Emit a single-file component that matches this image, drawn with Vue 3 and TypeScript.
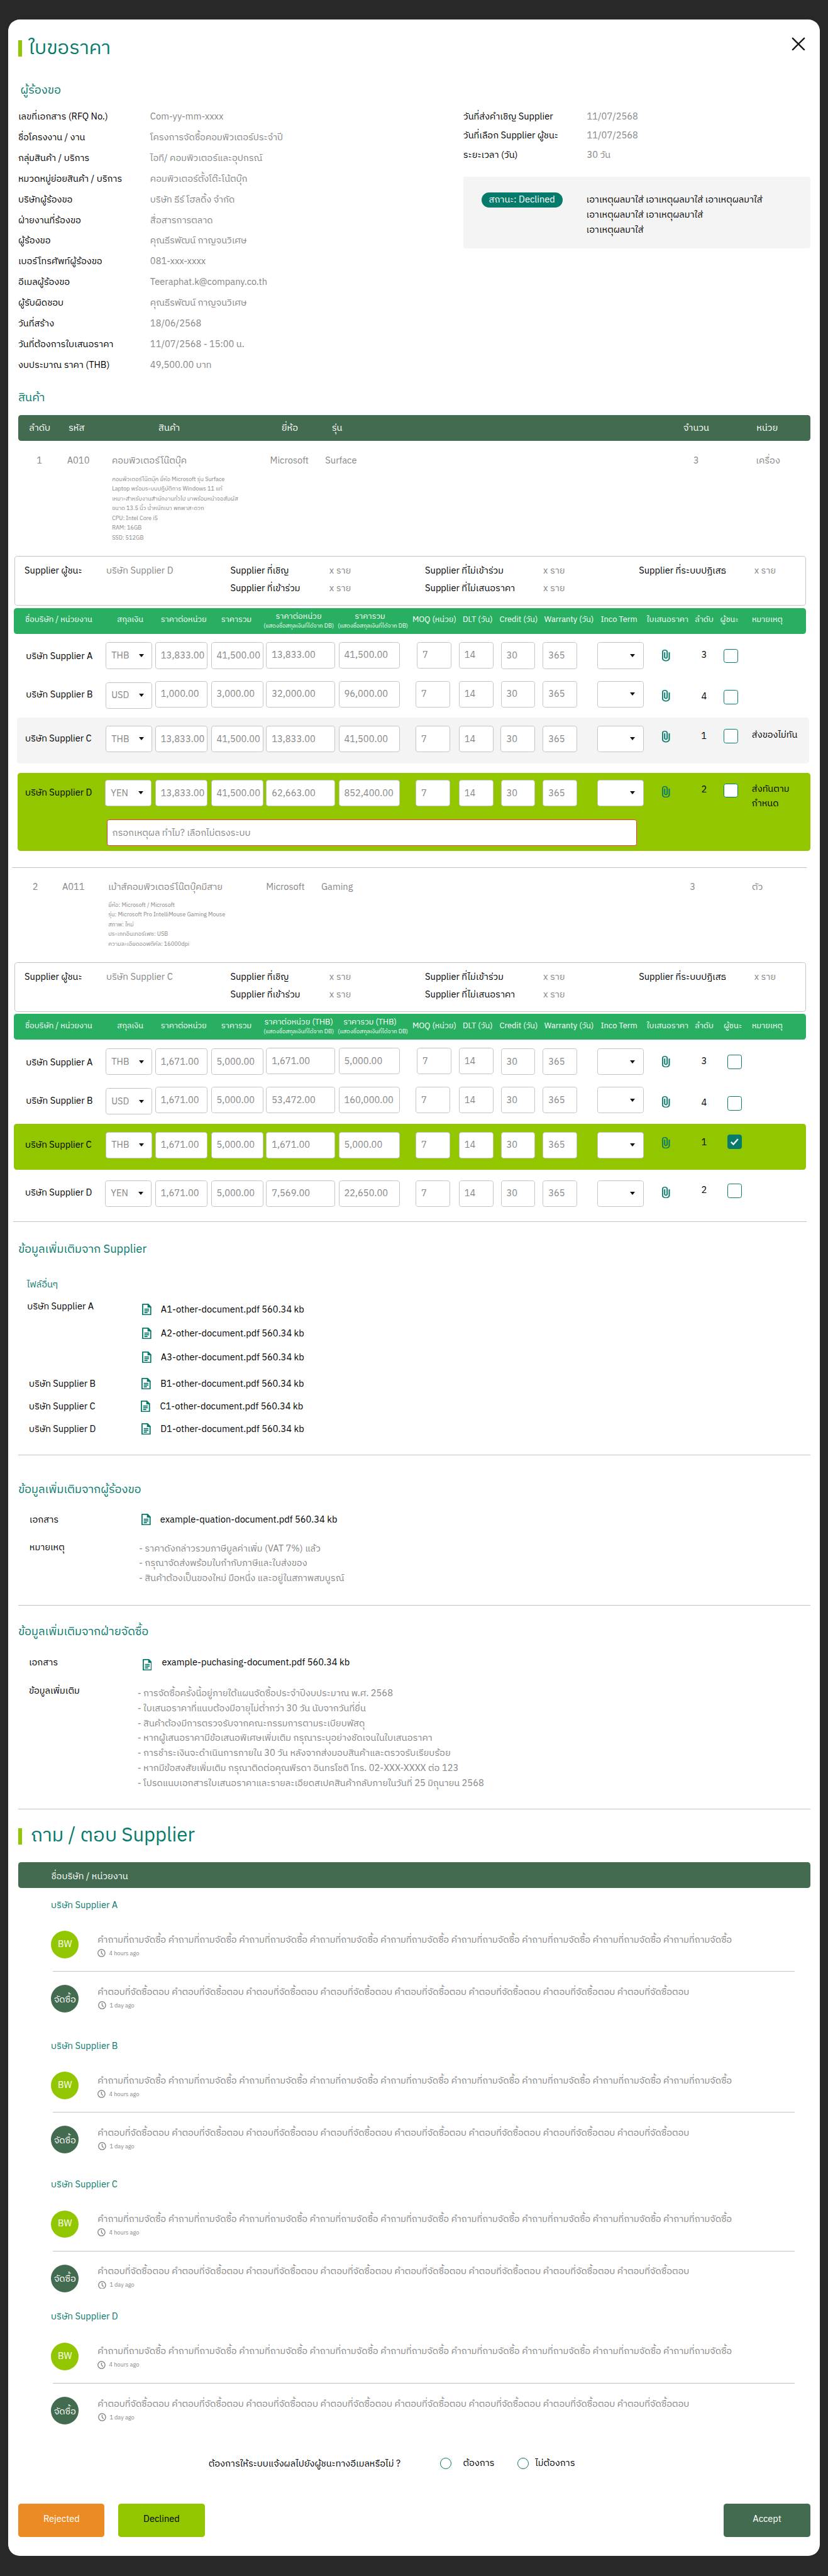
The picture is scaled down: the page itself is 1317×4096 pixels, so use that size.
<script setup lang="ts">
const details: [label: string, value: string][] = [
  ['เลขที่เอกสาร (RFQ No.)', 'Com-yy-mm-xxxx'],
  ['ชื่อโครงงาน / งาน', 'โครงการจัดซื้อคอมพิวเตอร์ประจำปี'],
  ['กลุ่มสินค้า / บริการ', 'ไอที/ คอมพิวเตอร์และอุปกรณ์'],
  ['หมวดหมู่ย่อยสินค้า / บริการ', 'คอมพิวเตอร์ตั้งโต๊ะโน้ตบุ๊ก'],
  ['บริษัทผู้ร้องขอ', 'บริษัท ธีร์ โฮลดิ้ง จำกัด'],
  ['ฝ่ายงานที่ร้องขอ', 'สื่อสารการตลาด'],
  ['ผู้ร้องขอ', 'คุณธีรพัฒน์ กาญจนวิเศษ'],
  ['เบอร์โทรศัพท์ผู้ร้องขอ', '081-xxx-xxxx'],
  ['อีเมลผู้ร้องขอ', 'Teeraphat.k@company.co.th'],
  ['ผู้รับผิดชอบ', 'คุณธีรพัฒน์ กาญจนวิเศษ'],
  ['วันที่สร้าง', '18/06/2568'],
  ['วันที่ต้องการใบเสนอราคา', '11/07/2568 - 15:00 น.'],
  ['งบประมาณ ราคา (THB)', '49,500.00 บาท'],
]

const dates: [label: string, value: string][] = [
  ['วันที่ส่งคำเชิญ Supplier', '11/07/2568'],
  ['วันที่เลือก Supplier ผู้ชนะ', '11/07/2568'],
  ['ระยะเวลา (วัน)', '30 วัน'],
]

const reasons = [
  'เอาเหตุผลมาใส่ เอาเหตุผลมาใส่ เอาเหตุผลมาใส่',
  'เอาเหตุผลมาใส่ เอาเหตุผลมาใส่',
  'เอาเหตุผลมาใส่',
]

const itemHead = ['ลำดับ', 'รหัส', 'สินค้า', 'ยี่ห้อ', 'รุ่น', 'จำนวน', 'หน่วย']

interface Row {
  key: string
  currency: string
  prices: string[]
  rank: string
  checked?: boolean
  remark?: string[]
  reason?: boolean
}
interface Item {
  key: string
  cells: string[]
  desc: string[]
  winner: string
  unitHead: string
  totalHead: string
  rows: Row[]
}

const items: Item[] = [
  {
    key: 'first',
    cells: ['1', 'A010', 'คอมพิวเตอร์โน๊ตบุ๊ค', 'Microsoft', 'Surface', '3', 'เครื่อง'],
    desc: [
      'คอมพิวเตอร์โน๊ตบุ๊ค ยี่ห้อ Microsoft รุ่น Surface',
      'Laptop พร้อมระบบปฏิบัติการ Windows 11 แท้',
      'เหมาะสำหรับงานสำนักงานทั่วไป มาพร้อมหน้าจอสัมผัส',
      'ขนาด 13.5 นิ้ว น้ำหนักเบา พกพาสะดวก',
      'CPU: Intel Core i5',
      'RAM: 16GB',
      'SSD: 512GB',
    ],
    winner: 'บริษัท Supplier D',
    unitHead: 'ราคาต่อหน่วย',
    totalHead: 'ราคารวม',
    rows: [
      { key: 'A', currency: 'THB', prices: ['13,833.00', '41,500.00', '13,833.00', '41,500.00'], rank: '3' },
      { key: 'B', currency: 'USD', prices: ['1,000.00', '3,000.00', '32,000.00', '96,000.00'], rank: '4' },
      { key: 'C', currency: 'THB', prices: ['13,833.00', '41,500.00', '13,833.00', '41,500.00'], rank: '1', remark: ['ส่งของไม่ทัน'] },
      { key: 'D', currency: 'YEN', prices: ['13,833.00', '41,500.00', '62,663.00', '852,400.00'], rank: '2', remark: ['ส่งทันตาม', 'กำหนด'], reason: true },
    ],
  },
  {
    key: 'second',
    cells: ['2', 'A011', 'เม้าส์คอมพิวเตอร์โน๊ตบุ๊คมีสาย', 'Microsoft', 'Gaming', '3', 'ตัว'],
    desc: [
      'ยี่ห้อ: Microsoft / Microsoft',
      'รุ่น: Microsoft Pro IntelliMouse Gaming Mouse',
      'สภาพ: ใหม่',
      'ประเภทอินเทอร์เฟซ: USB',
      'ความละเอียดออฟติคัล: 16000dpi',
    ],
    winner: 'บริษัท Supplier C',
    unitHead: 'ราคาต่อหน่วย (THB)',
    totalHead: 'ราคารวม (THB)',
    rows: [
      { key: 'A', currency: 'THB', prices: ['1,671.00', '5,000.00', '1,671.00', '5,000.00'], rank: '3' },
      { key: 'B', currency: 'USD', prices: ['1,671.00', '5,000.00', '53,472.00', '160,000.00'], rank: '4' },
      { key: 'C', currency: 'THB', prices: ['1,671.00', '5,000.00', '1,671.00', '5,000.00'], rank: '1', checked: true },
      { key: 'D', currency: 'YEN', prices: ['1,671.00', '5,000.00', '7,569.00', '22,650.00'], rank: '2' },
    ],
  },
]

const headLeft = ['ชื่อบริษัท / หน่วยงาน', 'สกุลเงิน', 'ราคาต่อหน่วย', 'ราคารวม']
const headRight = [
  'MOQ (หน่วย)', 'DLT (วัน)', 'Credit (วัน)', 'Warranty (วัน)', 'Inco Term',
  'ใบเสนอราคา', 'ลำดับ', 'ผู้ชนะ', 'หมายเหตุ',
]
const terms = [
  { key: 'moq', value: '7' },
  { key: 'dlt', value: '14' },
  { key: 'credit', value: '30' },
  { key: 'warranty', value: '365' },
]

const files = [
  { key: 'A', docs: ['A1', 'A2', 'A3'] },
  { key: 'B', docs: ['B1'] },
  { key: 'C', docs: ['C1'] },
  { key: 'D', docs: ['D1'] },
]

const extras = [
  {
    key: 'requester',
    title: 'ข้อมูลเพิ่มเติมจากผู้ร้องขอ',
    doc: 'example-quation-document.pdf 560.34 kb',
    label: 'หมายเหตุ',
    notes: [
      '- ราคาดังกล่าวรวมภาษีมูลค่าเพิ่ม (VAT 7%) แล้ว',
      '- กรุณาจัดส่งพร้อมใบกำกับภาษีและใบส่งของ',
      '- สินค้าต้องเป็นของใหม่ มือหนึ่ง และอยู่ในสภาพสมบูรณ์',
    ],
  },
  {
    key: 'purchasing',
    title: 'ข้อมูลเพิ่มเติมจากฝ่ายจัดซื้อ',
    doc: 'example-puchasing-document.pdf 560.34 kb',
    label: 'ข้อมูลเพิ่มเติม',
    notes: [
      '- การจัดซื้อครั้งนี้อยู่ภายใต้แผนจัดซื้อประจำปีงบประมาณ พ.ศ. 2568',
      '- ใบเสนอราคาที่แนบต้องมีอายุไม่ต่ำกว่า 30 วัน นับจากวันที่ยื่น',
      '- สินค้าต้องมีการตรวจรับจากคณะกรรมการตามระเบียบพัสดุ',
      '- หากผู้เสนอราคามีข้อเสนอพิเศษเพิ่มเติม กรุณาระบุอย่างชัดเจนในใบเสนอราคา',
      '- การชำระเงินจะดำเนินการภายใน 30 วัน หลังจากส่งมอบสินค้าและตรวจรับเรียบร้อย',
      '- หากมีข้อสงสัยเพิ่มเติม กรุณาติดต่อคุณพีรดา อินทรโชติ โทร. 02-XXX-XXXX ต่อ 123',
      '- โปรดแนบเอกสารใบเสนอราคาและรายละเอียดสเปคสินค้ากลับภายในวันที่ 25 มิถุนายน 2568',
    ],
  },
]

const threads = ['A', 'B', 'C', 'D']
const question = Array(9).fill('คำถามที่ถามจัดซื้อ').join(' ')
const answer = Array(8).fill('คำตอบที่จัดซื้อตอบ').join(' ')
</script>

<template>
  <div class="page">
    <main class="card">
      <header class="top">
        <i class="accent"></i>
        <h1 class="t">ใบขอราคา</h1>
        <svg class="close" viewBox="0 0 24 24"><path d="M2 2 22 22M22 2 2 22" /></svg>
      </header>

      <section class="request">
        <h2 class="h first-h"><span class="t">ผู้ร้องขอ</span></h2>
        <div class="request-cols">
          <dl class="details">
            <div v-for="d in details" :key="d[0]" class="detail">
              <dt><span class="t">{{ d[0] }}</span></dt>
              <dd><span class="t">{{ d[1] }}</span></dd>
            </div>
          </dl>
          <div class="side">
            <dl class="dates">
              <div v-for="d in dates" :key="d[0]" class="date">
                <dt><span class="t">{{ d[0] }}</span></dt>
                <dd><span class="t">{{ d[1] }}</span></dd>
              </div>
            </dl>
            <div class="status">
              <span class="pill"><span class="t">สถานะ: Declined</span></span>
              <div class="reasons">
                <p v-for="r in reasons" :key="r"><span class="t">{{ r }}</span></p>
              </div>
            </div>
          </div>
        </div>
      </section>

      <h2 class="h items-h"><span class="t">สินค้า</span></h2>
      <div class="item-head">
        <span v-for="h in itemHead" :key="h"><span class="t">{{ h }}</span></span>
      </div>

      <section v-for="item in items" :key="item.key" class="item" :class="item.key">
        <div class="item-info">
          <div class="item-row">
            <span v-for="(c, i) in item.cells" :key="i"><span class="t">{{ c }}</span></span>
          </div>
          <div class="desc">
            <p v-for="d in item.desc" :key="d"><span class="t">{{ d }}</span></p>
          </div>
        </div>
        <div class="summary">
          <b><span class="t">Supplier ผู้ชนะ</span></b><span><span class="t">{{ item.winner }}</span></span>
          <b><span class="t">Supplier ที่เชิญ</span></b><span><span class="t">x ราย</span></span>
          <b><span class="t">Supplier ที่ไม่เข้าร่วม</span></b><span><span class="t">x ราย</span></span>
          <b><span class="t">Supplier ที่ระบบปฏิเสธ</span></b><span><span class="t">x ราย</span></span>
          <b class="second-line"><span class="t">Supplier ที่เข้าร่วม</span></b><span><span class="t">x ราย</span></span>
          <b><span class="t">Supplier ที่ไม่เสนอราคา</span></b><span><span class="t">x ราย</span></span>
        </div>
        <div class="bid-head">
          <span v-for="h in headLeft" :key="h"><span class="t">{{ h }}</span></span>
          <span class="two">
            <span class="t mid">{{ item.unitHead }}</span>
            <small class="t mid">(แสดงชื่อสกุลเงินที่ได้จาก DB)</small>
          </span>
          <span class="two total">
            <span class="t mid">{{ item.totalHead }}</span>
            <small class="t mid">(แสดงชื่อสกุลเงินที่ได้จาก DB)</small>
          </span>
          <span v-for="h in headRight" :key="h" :class="{ win: h === 'ผู้ชนะ' }"><span class="t">{{ h }}</span></span>
        </div>
        <div v-for="r in item.rows" :key="r.key" class="bid" :class="'bid-' + r.key">
          <div class="bid-grid">
            <span class="name"><span class="t">บริษัท Supplier {{ r.key }}</span></span>
            <span class="box cur"><span class="t">{{ r.currency }}</span><i class="caret"></i></span>
            <span v-for="(p, i) in r.prices" :key="i" class="box" :class="'p' + (i + 1)"><span class="t">{{ p }}</span></span>
            <span v-for="t in terms" :key="t.key" class="box" :class="t.key"><span class="t">{{ t.value }}</span></span>
            <span class="box inco"><i class="caret"></i></span>
            <svg class="clip" viewBox="7 1 11 22" preserveAspectRatio="none">
              <path d="M16.5 6v11.5c0 2.21-1.79 4-4 4s-4-1.79-4-4V5c0-1.38 1.12-2.5 2.5-2.5s2.5 1.12 2.5 2.5v10.5c0 .55-.45 1-1 1s-1-.45-1-1V6H10v9.5c0 1.38 1.12 2.5 2.5 2.5s2.5-1.12 2.5-2.5V5c0-2.21-1.79-4-4-4S7 2.79 7 5v12.5c0 3.04 2.46 5.5 5.5 5.5s5.5-2.46 5.5-5.5V6h-1.5z" />
            </svg>
            <span class="rank"><span class="t">{{ r.rank }}</span></span>
            <span class="check" :class="{ on: r.checked }">
              <svg v-if="r.checked" viewBox="0 0 16 14"><path d="M2 7.5 6 11.5 14 2.5" /></svg>
            </span>
            <div class="remark">
              <p v-for="m in r.remark" :key="m"><span class="t">{{ m }}</span></p>
            </div>
          </div>
          <div v-if="r.reason" class="reason"><span class="t">กรอกเหตุผล ทำไม? เลือกไม่ตรงระบบ</span></div>
        </div>
      </section>

      <section class="files">
        <h2 class="h"><span class="t">ข้อมูลเพิ่มเติมจาก Supplier</span></h2>
        <h3><span class="t">ไฟล์อื่นๆ</span></h3>
        <div v-for="f in files" :key="f.key" class="file-row" :class="'file-' + f.key">
          <span class="file-owner"><span class="t">บริษัท Supplier {{ f.key }}</span></span>
          <div>
            <p v-for="d in f.docs" :key="d" class="doc">
              <svg viewBox="0 0 16 20"><path class="o" d="M1 1H10.5L15 5.5V19H1Z" /><path class="f" d="M9.5 0H10.5L16 5.5V6.5H9.5Z" /><path class="l" d="M4 9.5H12M4 12.5H12M4 15.5H9.5" /></svg>
              <span class="t">{{ d }}-other-document.pdf 560.34 kb</span>
            </p>
          </div>
        </div>
      </section>

      <section v-for="e in extras" :key="e.key" class="extra" :class="e.key">
        <h2 class="h"><span class="t">{{ e.title }}</span></h2>
        <div class="extra-doc">
          <span class="extra-label"><span class="t">เอกสาร</span></span>
          <p class="doc">
            <svg viewBox="0 0 16 20"><path class="o" d="M1 1H10.5L15 5.5V19H1Z" /><path class="f" d="M9.5 0H10.5L16 5.5V6.5H9.5Z" /><path class="l" d="M4 9.5H12M4 12.5H12M4 15.5H9.5" /></svg>
            <span class="t">{{ e.doc }}</span>
          </p>
        </div>
        <div class="extra-notes">
          <span class="extra-label"><span class="t">{{ e.label }}</span></span>
          <div class="notes">
            <p v-for="n in e.notes" :key="n"><span class="t">{{ n }}</span></p>
          </div>
        </div>
      </section>

      <header class="qa-title">
        <i class="accent"></i>
        <h1 class="t">ถาม / ตอบ Supplier</h1>
      </header>
      <div class="qa-head"><span class="t">ชื่อบริษัท / หน่วยงาน</span></div>

      <section v-for="s in threads" :key="s" class="thread" :class="'thread-' + s">
        <h3><span class="t">บริษัท Supplier {{ s }}</span></h3>
        <div class="message ask">
          <span class="avatar bw"><span class="t mid">BW</span></span>
          <div>
            <p><span class="t">{{ question }}</span></p>
            <small><svg viewBox="0 0 14 14"><circle cx="7" cy="7" r="6.2" /><path d="M7 3.2V7L9.4 9.8" /></svg><span class="t">4 hours ago</span></small>
          </div>
        </div>
        <div class="message reply">
          <span class="avatar buyer"><span class="t mid">จัดซื้อ</span></span>
          <div>
            <p><span class="t">{{ answer }}</span></p>
            <small class="in"><svg viewBox="0 0 14 14"><circle cx="7" cy="7" r="6.2" /><path d="M7 3.2V7L9.4 9.8" /></svg><span class="t">1 day ago</span></small>
          </div>
        </div>
      </section>

      <div class="notify">
        <span class="notify-q"><span class="t">ต้องการให้ระบบแจ้งผลไปยังผู้ชนะทางอีเมลหรือไม่ ?</span></span>
        <i class="radio"></i>
        <span class="yes"><span class="t">ต้องการ</span></span>
        <i class="radio"></i>
        <span class="no"><span class="t">ไม่ต้องการ</span></span>
      </div>

      <footer class="actions">
        <button class="rejected"><span class="t mid">Rejected</span></button>
        <button class="declined"><span class="t mid">Declined</span></button>
        <button class="accept"><span class="t mid">Accept</span></button>
      </footer>
    </main>
  </div>
</template>

<style>
body { margin: 0; background: #282828; }
</style>

<style scoped>
.page {
  --teal: #067a6b;
  --lime: #92c700;
  --forest: #436b4f;
  --line: #c4c4c4;
  box-sizing: border-box;
  width: 1440px;
  height: 4478px;
  padding: 34px 14px 0;
  background: #282828;
  zoom: 0.914583;
  font: 16px/24px "IBM Plex Sans Thai", "IBM Plex Sans", "Noto Sans", sans-serif;
  color: #000;
}
.page * { box-sizing: border-box; }
h1, h2, h3, p, dl, dd { margin: 0; font-weight: 400; }
b { font-weight: 400; }
.t { display: block; width: max-content; margin: 0 0 -.113em -.02em; padding-top: .113em; white-space: nowrap; }
.t.mid { margin-left: 0; }

.card { height: 4410px; border-radius: 20px; background: #fff; overflow: hidden; }
.accent { width: 6px; height: 28px; background: var(--lime); }
h1 { font-size: 34px; line-height: 50px; color: var(--teal); }
h1.t { padding-top: .11em; }
.top { display: flex; height: 107px; padding-left: 18px; }
.top .accent { margin-top: 36px; }
.top h1 { margin: 22px 0 0 11.5px; height: 50px; }
.close { width: 24px; height: 24px; margin: 30px 25px 0 auto; }
.close path { stroke: #18181b; stroke-width: 2.6; stroke-linecap: round; fill: none; }

.h { height: 30px; padding-left: 18px; font-size: 20px; line-height: 30px; color: var(--teal); }
.first-h { padding-left: 22px; }
.request { height: 535px; }
.request-cols { display: flex; padding: 13px 0 0 18px; }
.details { width: 774px; }
.detail { display: flex; height: 36px; line-height: 36px; }
.detail dt { width: 229.5px; }
dd { color: #868686; }
.side { width: 603px; padding-top: 1.5px; }
.date { display: flex; height: 33px; line-height: 33px; }
.date dt { width: 215px; }
.status { display: flex; height: 124px; margin-top: 23px; padding: 27px 0 0 32px; border-radius: 4px; background: #f4f4f4; }
.pill { width: 141px; height: 26px; margin-right: 41px; padding-left: 12.5px; border-radius: 13px; background: var(--teal); color: #fff; line-height: 26px; }
.reasons p { height: 26px; line-height: 26px; }

.item-head, .item-row { display: grid; grid-template-columns: 68.5px 156.5px 214px 87.5px 611.5px 127px 60px; }
.item-head { width: 1377px; height: 45px; margin: 16px 0 0 18px; padding-left: 19px; border-radius: 5px; background: var(--forest); color: #fff; line-height: 43px; }
.item-info { height: 200px; padding-top: 22px; color: #868686; }
.item-row { grid-template-columns: 53px 78px 275px 96px 640px 109px 60px; padding-left: 50px; height: 24px; }
.desc { padding: 11px 0 0 181px; font-size: 10px; line-height: 17px; }
.desc p { height: 17px; }
.second .item-info { height: 164px; padding-top: 21px; }
.second .item-row { grid-template-columns: 51.5px 80px 274.5px 96px 641px 108px 60px; padding-left: 43px; }
.second .desc { padding: 10.5px 0 0 174.5px; }

.summary {
  display: grid;
  grid-template-columns: 142px 216px 172px 166.5px 205.5px 166.5px 200.5px 60px;
  grid-auto-rows: 31px;
  align-content: start;
  width: 1377px; height: 86px; margin-left: 11px; padding: 12px 0 0 17px;
  border: 1px solid var(--line); border-radius: 5px;
}
.summary span { color: #868686; }
.summary b .t { color: #000; }
.second-line { grid-column: 3; }

.bid-head {
  display: grid;
  grid-template-columns: 160px 76px 105px 73.5px 129px 130px 87.5px 64px 78px 98px 80px 84px 44px 55px 60px;
  width: 1378px; height: 45px; margin: 4px 0 0 10px; padding-left: 20px;
  border-radius: 5px; background: #29af61; color: #fff; font-size: 14px; line-height: 39px;
}
.two { display: flex; flex-direction: column; align-items: center; width: 122px; height: 45px; padding-top: 4px; line-height: 20px; }
.two small { font-size: 10px; line-height: 14px; }
.total > span { margin-right: 10px; }
.second .win { padding-left: 6px; }

.bid { width: 1378px; height: 73px; margin-left: 10px; padding-left: 20px; border-radius: 5px; }
.bid-grid {
  display: grid;
  grid-template-columns: 140px 86px 97px 96px 126px 134px 75px 73px 73px 95px 113px 68px 39px 49px 90px;
  align-items: start;
}
.bid-A { --box: 15px; --cur: 15px; --high: 14px; --name: 27px; --clip: 28px; --rank: 25px; --check: 26px; }
.bid-B { --box: 9px; --cur: 11px; --high: 9px; --name: 21px; --clip: 25px; --rank: 24px; --check: 25px; }
.bid-C { --box: 14px; --cur: 14px; --high: 14px; --name: 24px; --clip: 23px; --rank: 20px; --check: 19px; --remark: 18px; height: 80px; }
.bid-D { --box: 12px; --cur: 12px; --high: 12px; --name: 22px; --clip: 23px; --rank: 17px; --check: 18px; --remark: 16px; }
.first .bid-C { width: 1378px; margin-left: 15px; padding-left: 15px; background: #f4f4f4; }
.second .bid-C { background: var(--lime); }
.first .bid-D { height: 136px; margin: 16px 0 28px 17px; padding-left: 13px; background: var(--lime); }
.second .bid-D { --box: 18px; --cur: 18px; --high: 18px; --name: 28px; --clip: 29px; --rank: 23px; --check: 24px; height: 90px; }
.first { border-bottom: 1px solid var(--line); border-image: linear-gradient(to right, transparent 8px, var(--line) 8px, var(--line) 1388px, transparent 1388px) 1; }
.second { border-bottom: 1px solid var(--line); border-image: linear-gradient(to right, transparent 10px, var(--line) 10px, var(--line) 1388px, transparent 1388px) 1; }
.name { margin-top: var(--name); }
.bid-A .name, .bid-B .name { margin-left: 1.5px; }
.box { height: 46px; margin-top: var(--box); padding-left: 9px; border: 1px solid var(--line); border-radius: 5px; background: #fff; line-height: 42px; color: #868686; }
.cur { display: flex; width: 81px; margin-top: var(--cur); }
.bid-D .cur { margin-left: -1px; }
.caret { width: 0; height: 0; margin: 19px 14px 0 auto; border: 5px solid transparent; border-top: 6px solid #111; border-bottom: 0; }
.p1, .p2 { width: 91px; }
.p3 { width: 120px; }
.p4 { width: 107px; }
.p3, .p4, .moq, .dlt { margin-top: var(--high); }
.moq, .dlt, .credit, .warranty { width: 60px; }
.bid-A .moq { margin-left: 2px; }
.inco { display: flex; width: 81px; }
.clip { width: 13.5px; height: 20px; margin-top: var(--clip); }
.clip path { fill: var(--teal); stroke: var(--teal); stroke-width: .3; }
.rank { margin-top: var(--rank); }
.check { display: flex; align-items: center; justify-content: center; width: 25px; height: 25px; margin-top: var(--check); border: 1.2px solid var(--teal); border-radius: 4px; background: #fff; }
.second .check { margin-left: 6px; }
.check.on { background: var(--teal); }
.check svg { width: 16px; height: 14px; }
.check path { fill: none; stroke: #fff; stroke-width: 2.6; }
.remark { margin-top: var(--remark); line-height: 26px; }
.remark p { height: 26px; margin-top: -1px; }
.reason { width: 922px; height: 46px; margin: 15px 0 0 141.5px; padding-left: 9px; border: 1px solid #e8384f; border-radius: 4px; background: #fff; line-height: 42px; color: #868686; }

.files { height: 405.5px; padding-top: 31px; border-bottom: 1px solid var(--line); margin: 0 17px 0 18px; }
.files .h, .extra .h { padding-left: 0; }
h3 { font-size: 16px; }
.files h3 { height: 24px; margin: 35.5px 0 14px 15px; color: var(--teal); }
.file-row { display: flex; align-items: start; padding-left: 18.5px; }
.file-row > span { width: 196px; }
.doc { display: flex; height: 24px; }
.doc svg { width: 16px; height: 20px; margin: 1.5px 17px 0 0; }
.doc .o { fill: none; stroke: var(--teal); stroke-width: 2; stroke-linejoin: round; }
.doc .f { fill: var(--teal); }
.doc .l { fill: none; stroke: var(--teal); stroke-width: 1.8; }
.file-A { height: 134.5px; padding-left: 15.5px; }
.file-A > span { width: 199.5px; }
.file-A .doc { height: 41.3px; }
.file-A > div { padding-top: 6px; }
.file-B, .file-C { height: 39.6px; }
.file-C > span { width: 195px; }

.extra { margin: 0 17px 0 18px; border-bottom: 1px solid var(--line); }
.requester { height: 261px; padding-top: 43px; }
.purchasing { height: 354.5px; padding-top: 30px; }
.extra-doc, .extra-notes { display: flex; align-items: start; padding-left: 19.5px; }
.extra-doc { height: 48px; margin-top: 26.5px; }
.extra-label { width: 190.5px; }
.requester .extra-doc .extra-label { width: 194.5px; }
.notes { padding-top: 1px; line-height: 26px; color: #868686; }
.notes p { height: 26px; }
.purchasing .extra-doc { height: 50px; }
.purchasing .extra-doc, .purchasing .extra-notes { padding-left: 18.5px; }
.purchasing .extra-label { width: 189px; }
.purchasing .extra-doc .extra-label { width: 197.5px; }
.purchasing .doc svg { margin-top: 6px; margin-right: 18px; }
.purchasing .notes { padding-top: 3px; }

.qa-title { display: flex; height: 92px; padding-left: 18px; }
.qa-title .accent { margin-top: 33px; }
.qa-title h1 { height: 50px; margin: 18px 0 0 15.5px; }
.qa-head { width: 1377px; height: 45px; margin-left: 18px; padding-left: 57.5px; border-radius: 5px; background: var(--forest); color: #fff; line-height: 47px; }

.thread { height: 245px; padding: 17px 0 0 75px; }
.thread-B { height: 241px; }
.thread-C { height: 230px; }
.thread-D { height: 261px; }
.thread h3 { height: 24px; color: var(--teal); }
.message { display: flex; color: #868686; }
.message p { height: 24px; }
.ask { height: 103px; padding-top: 33px; }
.reply { padding-top: 23px; border-top: 1px solid var(--line); border-image: linear-gradient(to right, transparent 4px, var(--line) 4px, var(--line) 1292px, transparent 1292px) 1; }
.avatar { display: flex; flex: none; align-items: center; justify-content: center; width: 48px; height: 48px; margin-right: 33px; padding-bottom: 2px; border-radius: 50%; color: #fff; }
.bw { background: var(--lime); }
.buyer { padding: 2px 0 0; background: var(--forest); }
.ask p { margin-top: 3px; }
.message small { display: flex; height: 17px; margin-top: 3px; font-size: 10px; line-height: 17px; }
.message small.in { padding-left: 1px; }
.message small svg { width: 14px; height: 14px; margin: 1.5px 6px 0 0; fill: none; stroke: #868686; stroke-width: 1.5; }

.notify { display: flex; height: 50px; margin-top: 11px; padding-left: 349px; }
.notify-q { width: 402px; }
.radio { width: 20px; height: 20px; margin-top: 2px; border: 2px solid var(--teal); border-radius: 50%; }
.yes { width: 94.5px; margin: -1px 20.5px 0 0; padding-left: 20.5px; }
.no { margin-top: -1px; padding-left: 11px; }

.actions { display: flex; gap: 24px; margin: 32px 17px 0 18px; }
button { display: flex; align-items: center; justify-content: center; width: 150px; height: 58px; padding: 0 0 4px; border: 0; border-radius: 5px; font: inherit; color: #fff; }
.rejected { background: #ec8b24; }
.declined { background: var(--lime); color: #000; }
.accept { margin-left: auto; background: var(--forest); }
</style>
